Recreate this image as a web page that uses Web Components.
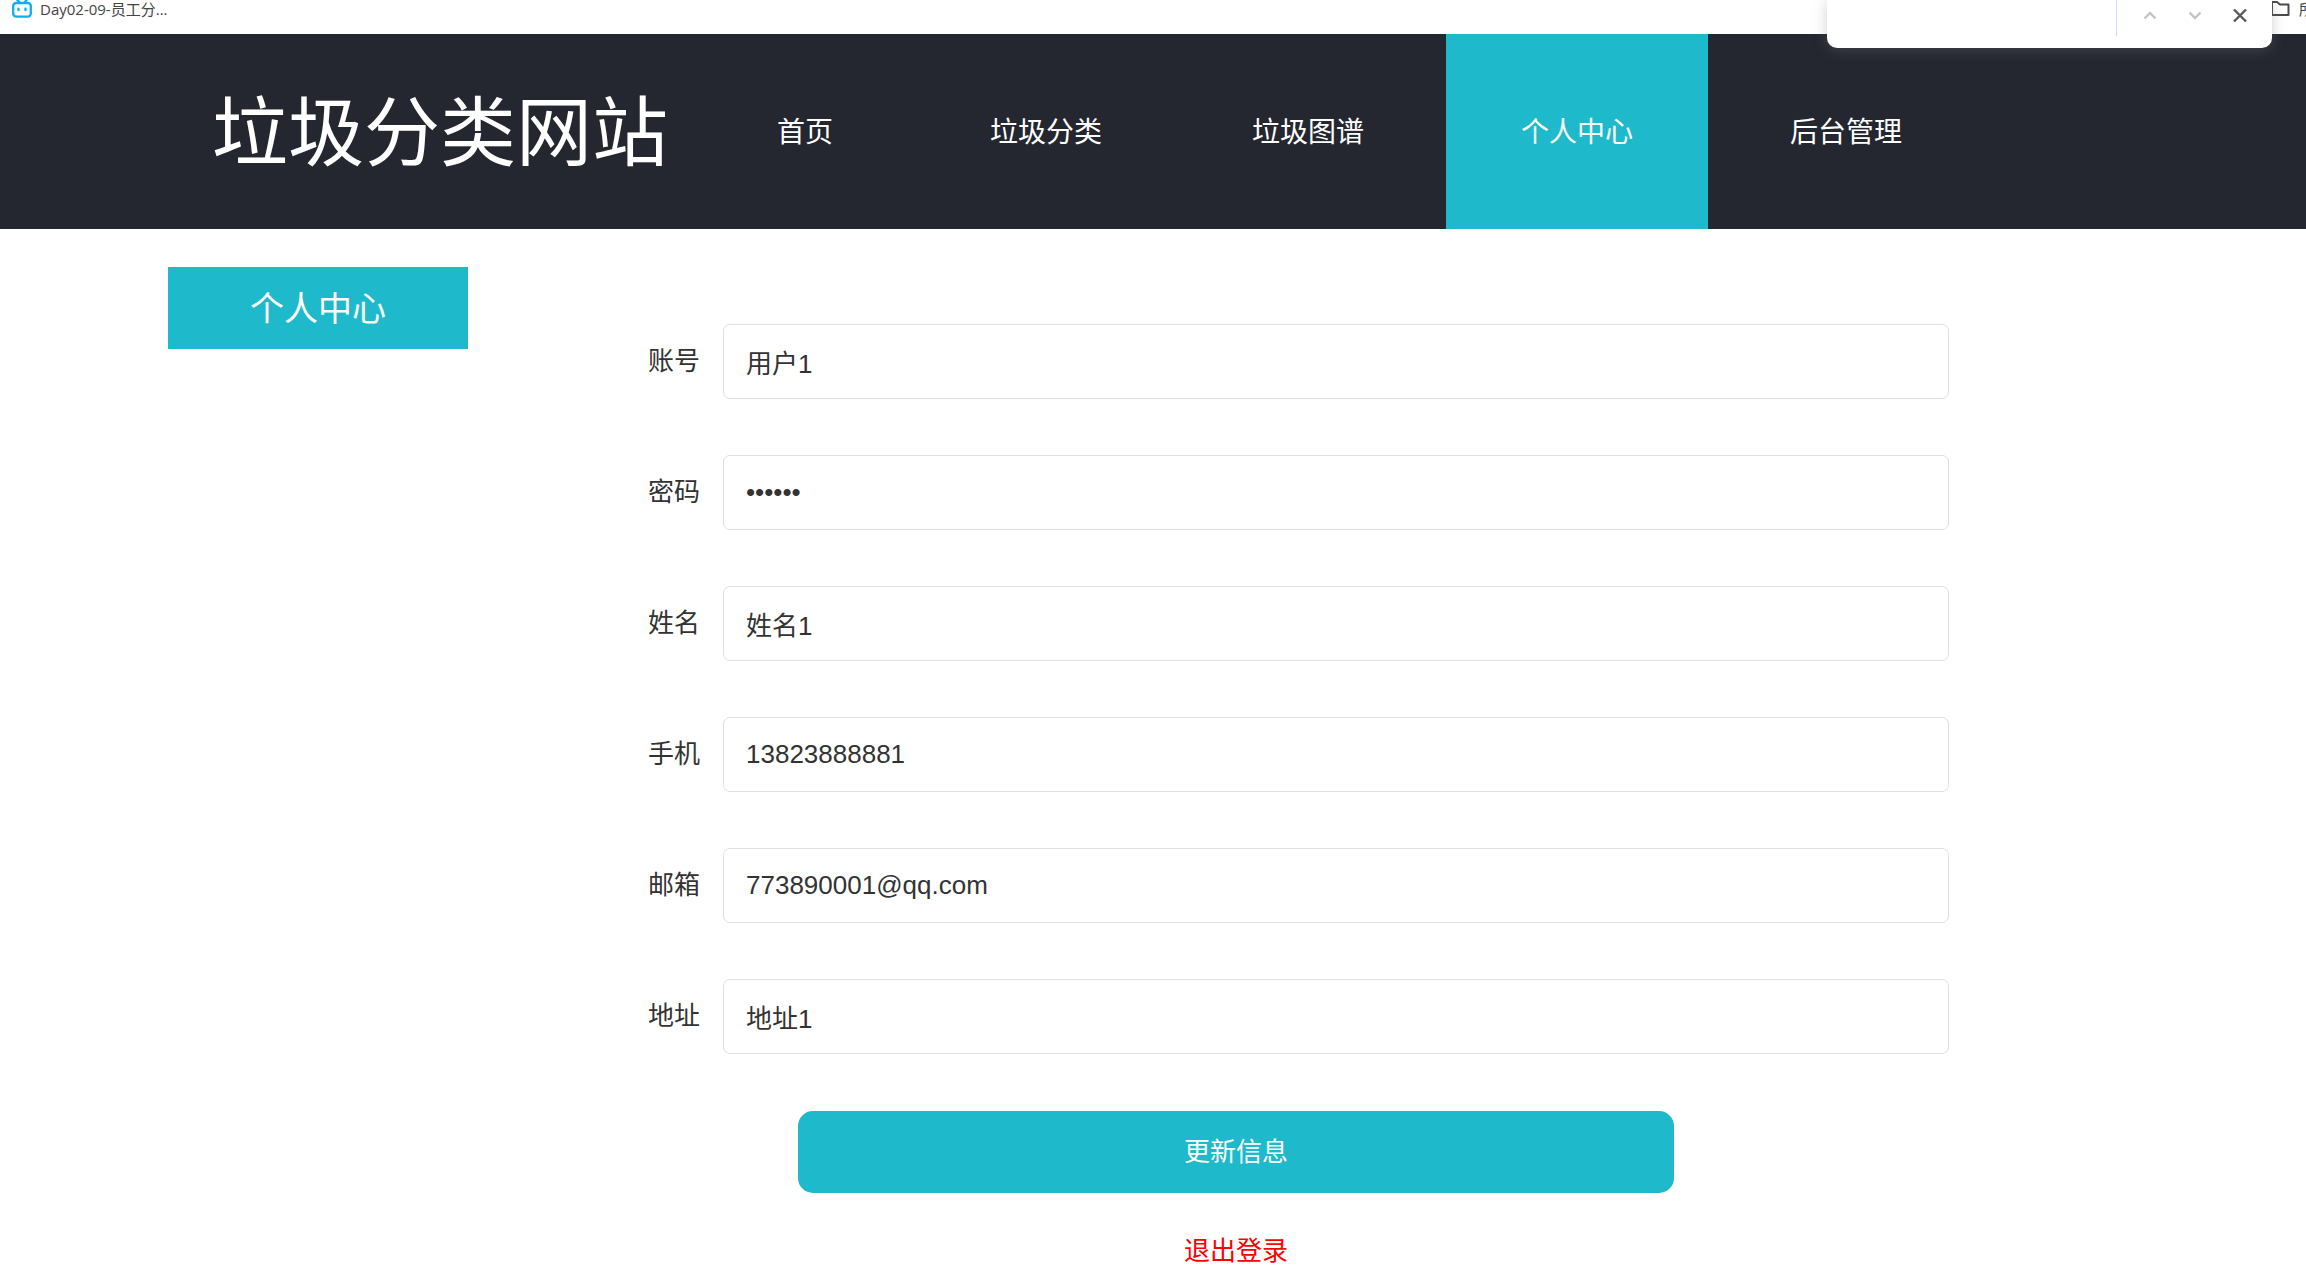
<!DOCTYPE html>
<html lang="zh-CN">
<head>
<meta charset="utf-8">
<title>垃圾分类网站</title>
<style>
  html { --teal: #1eb9ca; --dark: #242730; background: #fff; }
  body { margin: 0; overflow-x: hidden; color: #333; font-family: "Liberation Sans", "Noto Sans CJK SC", sans-serif; }
</style>
</head>
<body>
<bookmark-bar></bookmark-bar>
<find-bar></find-bar>
<site-header brand="垃圾分类网站">
  <nav-item>首页</nav-item>
  <nav-item joined>垃圾分类</nav-item>
  <nav-item>垃圾图谱</nav-item>
  <nav-item active>个人中心</nav-item>
  <nav-item>后台管理</nav-item>
</site-header>
<page-layout>
  <side-menu slot="side">个人中心</side-menu>
  <profile-form>
    <form-field label="账号" value="用户1"></form-field>
    <form-field label="密码" value="123456" type="password"></form-field>
    <form-field label="姓名" value="姓名1"></form-field>
    <form-field label="手机" value="13823888881" type="tel"></form-field>
    <form-field label="邮箱" value="773890001@qq.com" type="email"></form-field>
    <form-field label="地址" value="地址1"></form-field>
  </profile-form>
</page-layout>
<script>
const define = (name, render) => customElements.define(name, class extends HTMLElement {
  connectedCallback() {
    if (this.shadowRoot) return;
    this.attachShadow({ mode: 'open' }).innerHTML = render(this);
  }
});

define('bookmark-bar', () => `
<style>
  :host { display: flex; justify-content: space-between; height: 34px; overflow: hidden; background: #fff;
    font: 15px/18px "Open Sans", "Noto Sans CJK SC", sans-serif; color: #444; }
  a { display: flex; gap: 8px; height: 20px; color: inherit; text-decoration: none; white-space: nowrap; }
  .first { margin-left: 12px; }
  .all { width: 34px; gap: 9px; }
  svg { display: block; flex: none; }
</style>
<a class="first" href="#">
  <svg width="20" height="20" viewBox="0 0 20 20" fill="none" stroke="#10aeec" stroke-width="2.300" stroke-linecap="round">
    <path d="M4.500 -1l3.500 4M15.500 -1l-3.500 4"/><rect x="1.200" y="3" width="17.600" height="13.600" rx="3"/><path d="M6.500 8.800v1.200M13.500 8.800v1.200" stroke-width="2.400"/>
  </svg>
  <span>Day02-09-员工分...</span>
</a>
<a class="all" href="#">
  <svg width="18" height="20" viewBox="0 0 18 20" fill="none" stroke="#4a4a4a" stroke-width="2"><path d="M0 2h5l3 2.500h8.500v10.500H0z" stroke-linejoin="round"/></svg>
  <span>所有书签</span>
</a>`);

define('find-bar', () => `
<style>
  :host { position: absolute; z-index: 2; top: 0; right: 34px; width: 445px; height: 48px; box-sizing: border-box;
    display: flex; align-items: flex-start; justify-content: flex-end; padding-right: 16px;
    background: #fff; border-radius: 0 0 10px 10px; box-shadow: 0 2px 14px rgba(120,120,120,.35); }
  input { flex: 1; min-width: 0; height: 36px; border: 0; border-right: 1px solid #c8dcf8; padding: 0 16px; box-sizing: border-box; background: none; outline: 0; margin-right: 17px; }
  button { width: 32px; height: 32px; padding: 0; border: 0; background: none; margin-right: 13px; }
  button:last-child { margin-right: 0; }
  svg { display: block; }
</style>
<input aria-label="在页面中查找">
<button aria-label="上一个"><svg width="32" height="32" fill="none" stroke="#c4c4c4" stroke-width="2.400"><path d="M10.500 18.500l5.500-5.500 5.500 5.500"/></svg></button>
<button aria-label="下一个"><svg width="32" height="32" fill="none" stroke="#c4c4c4" stroke-width="2.400"><path d="M10.500 12.500l5.500 5.500 5.500-5.500"/></svg></button>
<button aria-label="关闭"><svg width="32" height="32" fill="none" stroke="#5a5a5a" stroke-width="2.400"><path d="M10 9.500l12 12M22 9.500l-12 12"/></svg></button>`);

define('site-header', el => `
<style>
  :host { display: flex; height: 195px; padding-left: 212px; background: var(--dark); color: #fff; }
  h1 { margin: 0; width: 490px; font-size: 76px; line-height: 199px; font-weight: 400; white-space: nowrap; }
  nav { display: flex; }
</style>
<h1>${el.getAttribute('brand')}</h1>
<nav><slot></slot></nav>`);

define('nav-item', () => `
<style>
  :host { display: block; margin-right: 7px; }
  :host([joined]) { margin-right: 0; }
  a { display: block; height: 195px; padding: 0 75px; font-size: 28px; line-height: 197px; color: #fff; text-decoration: none; white-space: nowrap; }
  :host([active]) a { background: var(--teal); }
</style>
<a href="#"><slot></slot></a>`);

define('page-layout', () => `
<style>
  :host { display: flex; align-items: flex-start; gap: 55px; padding: 38px 357px 0 168px; }
  aside { flex: 0 0 300px; }
  main { flex: 1; min-width: 0; }
</style>
<aside><slot name="side"></slot></aside>
<main><slot></slot></main>`);

define('side-menu', () => `
<style>
  :host { display: block; }
  a { display: block; height: 82px; background: var(--teal); color: #fff; font-size: 34px; line-height: 84px; text-align: center; text-decoration: none; }
</style>
<a href="#"><slot></slot></a>`);

define('profile-form', () => `
<style>
  :host { display: block; padding-top: 57px; }
  form { display: flex; flex-direction: column; gap: 56px; }
  .actions { display: flex; flex-direction: column; align-items: center; gap: 43px; padding-top: 1px; }
  button { width: 61.5%; height: 82px; padding: 0; border: 0; border-radius: 15px; background: var(--teal); color: #fff; font: inherit; font-size: 26px; line-height: 82px; }
  a { color: #f00; font-size: 26px; line-height: 30px; text-decoration: none; }
</style>
<form onsubmit="return false">
  <slot></slot>
  <div class="actions"><button>更新信息</button><a href="#">退出登录</a></div>
</form>`);

define('form-field', el => `
<style>
  :host { display: flex; height: 75px; font-size: 26px; }
  label { flex: 0 0 200px; box-sizing: border-box; padding-right: 23px; text-align: right; line-height: 75px; }
  input { flex: 1; min-width: 0; box-sizing: border-box; height: 75px; margin: 0; padding: 0 22px; border: 1px solid #dcdfe6; border-radius: 7px; background: #fff; color: #333; font: inherit; outline: 0; }
</style>
<label for="f">${el.getAttribute('label')}</label>
<input id="f" type="${el.getAttribute('type') || 'text'}" value="${el.getAttribute('value')}">`);
</script>
</body>
</html>
